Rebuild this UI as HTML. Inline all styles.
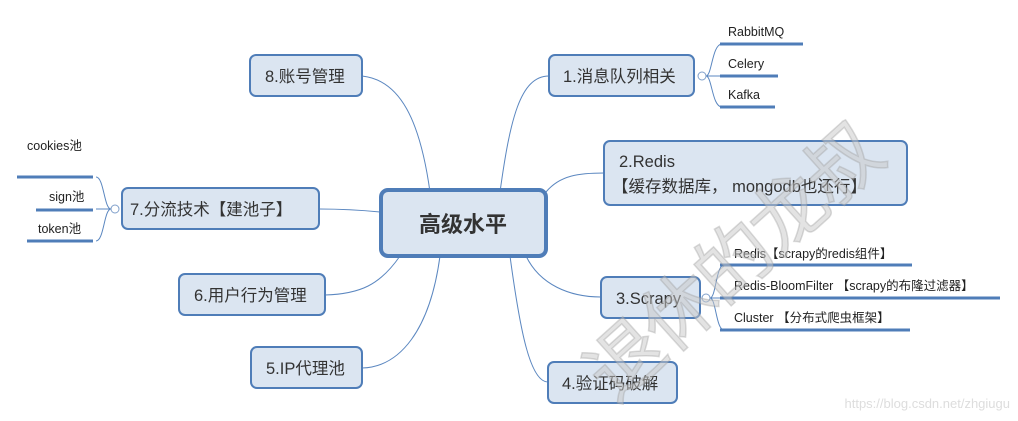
<!DOCTYPE html>
<html><head><meta charset="utf-8"><style>
html,body{margin:0;padding:0;background:#fff;}
svg{display:block;font-family:"Liberation Sans","Noto Sans CJK SC",sans-serif;}
</style></head><body>
<svg width="1018" height="421" viewBox="0 0 1018 421" xmlns="http://www.w3.org/2000/svg">
<g fill="none" stroke="#5b87c0" stroke-width="1">
<path d="M430 192 C420 120 400 80 362 76"/>
<path d="M380 212 C360 210 340 209 319 209"/>
<path d="M400 256 C380 285 360 294 325 295"/>
<path d="M440 256 C430 330 400 367 362 368"/>
<path d="M500 192 C510 120 520 76 549 76"/>
<path d="M546 192 C560 175 580 173 604 173"/>
<path d="M526 256 C540 285 570 297 601 297"/>
<path d="M510 256 C520 330 530 382 548 382"/>
<path d="M706 76 C712 76 712 44 722 44 M706 76 H720 M706 76 C712 76 712 107 722 107"/>
<path d="M111 209 C104 209 104 177 96 177 M111 209 H96 M111 209 C104 209 104 241 96 241"/>
<path d="M710 298 C716 298 716 265 724 265 M710 298 H724 M710 298 C716 298 716 330 724 330"/>
</g>
<g stroke="#4f7db8" stroke-width="3">
<line x1="720" y1="44" x2="803" y2="44"/><line x1="720" y1="76" x2="778" y2="76"/><line x1="720" y1="107" x2="775" y2="107"/>
<line x1="17" y1="177" x2="93" y2="177"/><line x1="36" y1="210" x2="93" y2="210"/><line x1="27" y1="241" x2="93" y2="241"/>
<line x1="720" y1="265" x2="912" y2="265"/><line x1="720" y1="298" x2="1000" y2="298"/><line x1="720" y1="330" x2="910" y2="330"/>
</g>
<g fill="#fff" stroke="#7f9fca" stroke-width="1">
<circle cx="702" cy="76" r="4"/><circle cx="115" cy="209" r="4"/><circle cx="706" cy="298" r="4"/>
</g>
<g fill="#dbe5f1" stroke="#4f7db8" stroke-width="2">
<rect x="549" y="55" width="145" height="41" rx="6"/>
<rect x="604" y="141" width="303" height="64" rx="6"/>
<rect x="601" y="277" width="99" height="41" rx="6"/>
<rect x="548" y="362" width="129" height="41" rx="6"/>
<rect x="250" y="55" width="112" height="41" rx="6"/>
<rect x="122" y="188" width="197" height="41" rx="6"/>
<rect x="179" y="274" width="146" height="41" rx="6"/>
<rect x="251" y="347" width="111" height="41" rx="6"/>
<rect x="381" y="190" width="165" height="66" rx="7" stroke-width="4"/>
</g>
<g fill="#333" font-size="16.5">
<text x="563" y="82">1.消息队列相关</text>
<text x="619" y="167">2.Redis</text>
<text x="612" y="192">【缓存数据库， mongodb也还行】</text>
<text x="616" y="304">3.Scrapy</text>
<text x="562" y="389">4.验证码破解</text>
<text x="265" y="82">8.账号管理</text>
<text x="130" y="215">7.分流技术【建池子】</text>
<text x="194" y="301">6.用户行为管理</text>
<text x="266" y="374">5.IP代理池</text>
<text x="463" y="232" font-size="22" font-weight="bold" text-anchor="middle" fill="#333">高级水平</text>
</g>
<g fill="#222" font-size="12.5">
<text x="728" y="36">RabbitMQ</text><text x="728" y="68">Celery</text><text x="728" y="99">Kafka</text>
<text x="27" y="150">cookies池</text><text x="49" y="201">sign池</text><text x="38" y="233">token池</text>
<text x="734" y="258">Redis【scrapy的redis组件】</text>
<text x="734" y="290">Redis-BloomFilter 【scrapy的布隆过滤器】</text>
<text x="734" y="322">Cluster 【分布式爬虫框架】</text>
</g>
<text x="0" y="0" transform="translate(615,405) rotate(-42)" font-size="76" fill="#c8c8c8" fill-opacity="0.5" stroke="#999" stroke-opacity="0.35" stroke-width="1.5" letter-spacing="-3">退休的龙叔</text>
<text x="1010" y="408" text-anchor="end" font-size="13" fill="#ddd">https://blog.csdn.net/zhgiugu</text>
</svg>
</body></html>
